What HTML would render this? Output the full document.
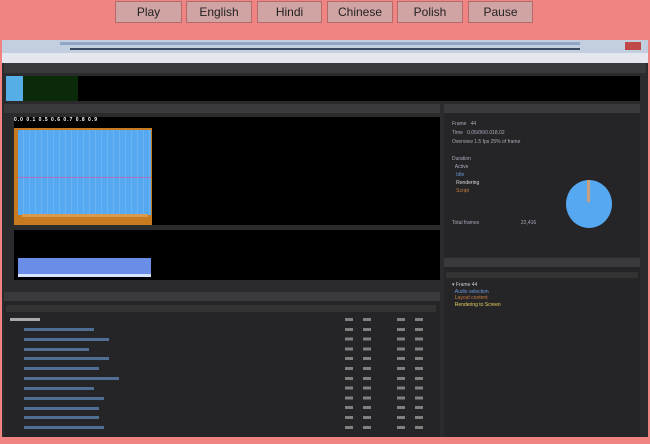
<!DOCTYPE html>
<html><head><style>
*{margin:0;padding:0;box-sizing:border-box}
body{width:650px;height:444px;background:#ef8482;position:relative;overflow:hidden;font-family:"Liberation Sans",sans-serif}
.a{position:absolute}
.btn{position:absolute;top:1px;height:22px;background:#cfa4a3;border:1px solid #b46a68;font-size:12px;color:#222;text-align:center;line-height:20px}
.t{position:absolute;font-size:5px;color:#aab}
.row{position:absolute;left:24px;height:3px;background:#5b7fb0;opacity:.8}
</style></head><body>
<div class="btn" style="left:115px;width:67px">Play</div>
<div class="btn" style="left:186px;width:66px">English</div>
<div class="btn" style="left:257px;width:65px">Hindi</div>
<div class="btn" style="left:327px;width:66px">Chinese</div>
<div class="btn" style="left:397px;width:66px">Polish</div>
<div class="btn" style="left:468px;width:65px">Pause</div>

<div class="a" style="left:2px;top:40px;width:646px;height:398px;background:#2b2b2e"></div>
<div class="a" style="left:2px;top:40px;width:646px;height:13px;background:#c3cfdf"></div>
<div class="a" style="left:60px;top:42px;width:520px;height:3px;background:#8fa6c6"></div>
<div class="a" style="left:70px;top:48px;width:510px;height:2px;background:#3a4a60"></div>
<div class="a" style="left:625px;top:42px;width:16px;height:8px;background:#c04848"></div>
<div class="a" style="left:2px;top:53px;width:646px;height:10px;background:#e4e8ee"></div>
<div class="a" style="left:4px;top:63px;width:642px;height:10px;background:#3a3a3d"></div>
<div class="a" style="left:6px;top:76px;width:634px;height:25px;background:#000"></div>
<div class="a" style="left:6px;top:76px;width:17px;height:25px;background:#55aee6"></div>
<div class="a" style="left:23px;top:76px;width:55px;height:25px;background:#0a2a0a"></div>

<div class="a" style="left:4px;top:104px;width:436px;height:9px;background:#3a3a3d"></div>
<div class="a" style="left:14px;top:117px;width:426px;height:108px;background:#000"></div>
<div class="a" style="left:14px;top:128px;width:138px;height:97px;background:#c87a20"></div>
<div class="a" style="left:18px;top:130px;width:133px;height:85px;background:repeating-linear-gradient(90deg,#56a8f0 0 5px,#6ab4f4 5px 6px)"></div>
<div class="a" style="left:18px;top:177px;width:133px;height:1px;background:#b070c0"></div>
<div class="a" style="left:22px;top:214px;width:126px;height:3px;background:#d89a50"></div>
<div class="a" style="left:14px;top:117px;width:140px;height:9px;color:#fff;font-size:5px;font-weight:bold;letter-spacing:1px">0.0 0.1 0.5 0.6 0.7 0.8 0.9</div>
<div class="a" style="left:14px;top:230px;width:426px;height:50px;background:#000"></div>
<div class="a" style="left:18px;top:258px;width:133px;height:16px;background:#6a8ee8"></div>
<div class="a" style="left:18px;top:274px;width:133px;height:3px;background:#d8e4ff"></div>

<div class="a" style="left:444px;top:104px;width:196px;height:9px;background:#3a3a3d"></div>
<div class="a" style="left:444px;top:113px;width:196px;height:144px;background:#252527"></div>
<div class="t" style="left:452px;top:120px;line-height:9px">Frame &nbsp; 44<br>Time &nbsp; 0.05/06/0.018.02<br>Overview 1.5 fps 25% of frame</div>
<div class="t" style="left:452px;top:155px;line-height:8px">Duration<br>&nbsp;&nbsp;Active<br><span style="color:#6a9ad8">&nbsp;&nbsp;&nbsp;Idle</span><br><span style="color:#ddd">&nbsp;&nbsp;&nbsp;Rendering</span><br><span style="color:#c88040">&nbsp;&nbsp;&nbsp;Script</span><br><br><br><br>Total frames &nbsp;&nbsp;&nbsp;&nbsp;&nbsp;&nbsp;&nbsp;&nbsp;&nbsp;&nbsp;&nbsp;&nbsp;&nbsp;&nbsp;&nbsp;&nbsp;&nbsp;&nbsp;&nbsp;&nbsp;&nbsp;&nbsp;&nbsp;&nbsp;&nbsp;&nbsp;&nbsp;&nbsp;&nbsp;22,416</div>
<div class="a" style="left:566px;top:180px;width:46px;height:48px;border-radius:50%;background:#56a8f0"></div>
<div class="a" style="left:587px;top:180px;width:3px;height:22px;background:#c8a080"></div>
<div class="a" style="left:444px;top:258px;width:196px;height:9px;background:#3a3a3d"></div>
<div class="a" style="left:444px;top:267px;width:196px;height:170px;background:#252527"></div>
<div class="a" style="left:446px;top:272px;width:192px;height:6px;background:#333"></div>
<div class="t" style="left:452px;top:282px;line-height:6.5px;color:#ccc">&#9662; Frame 44<br><span style="color:#6a9ad8">&nbsp;&nbsp;Audio selection</span><br><span style="color:#c87a40">&nbsp;&nbsp;Layout content</span><br><span style="color:#e8d060">&nbsp;&nbsp;Rendering to Screen</span></div>

<div class="a" style="left:4px;top:292px;width:436px;height:9px;background:#3a3a3d"></div>
<div class="a" style="left:4px;top:301px;width:436px;height:136px;background:#252527"></div>
<div class="a" style="left:6px;top:305px;width:430px;height:7px;background:#333"></div>
<div class="row" style="left:10px;top:318px;width:30px;background:#ccc"></div>
<div class="row" style="top:328px;width:70px"></div>
<div class="row" style="top:338px;width:85px"></div>
<div class="row" style="top:348px;width:65px"></div>
<div class="row" style="top:357px;width:85px"></div>
<div class="row" style="top:367px;width:75px"></div>
<div class="row" style="top:377px;width:95px"></div>
<div class="row" style="top:387px;width:70px"></div>
<div class="row" style="top:397px;width:80px"></div>
<div class="row" style="top:407px;width:75px"></div>
<div class="row" style="top:416px;width:75px"></div>
<div class="row" style="top:426px;width:80px"></div>
<div class="a" style="left:345px;top:318px;width:80px;height:112px;background:repeating-linear-gradient(#bbb 0 3px,transparent 3px 9.8px);-webkit-mask:linear-gradient(90deg,#000 0 8px,transparent 8px 18px,#000 18px 26px,transparent 26px 52px,#000 52px 60px,transparent 60px 70px,#000 70px 78px,transparent 78px);opacity:.6"></div>
<div class="a" style="left:0;top:437px;width:650px;height:7px;background:#ef8482"></div>
</body></html>
